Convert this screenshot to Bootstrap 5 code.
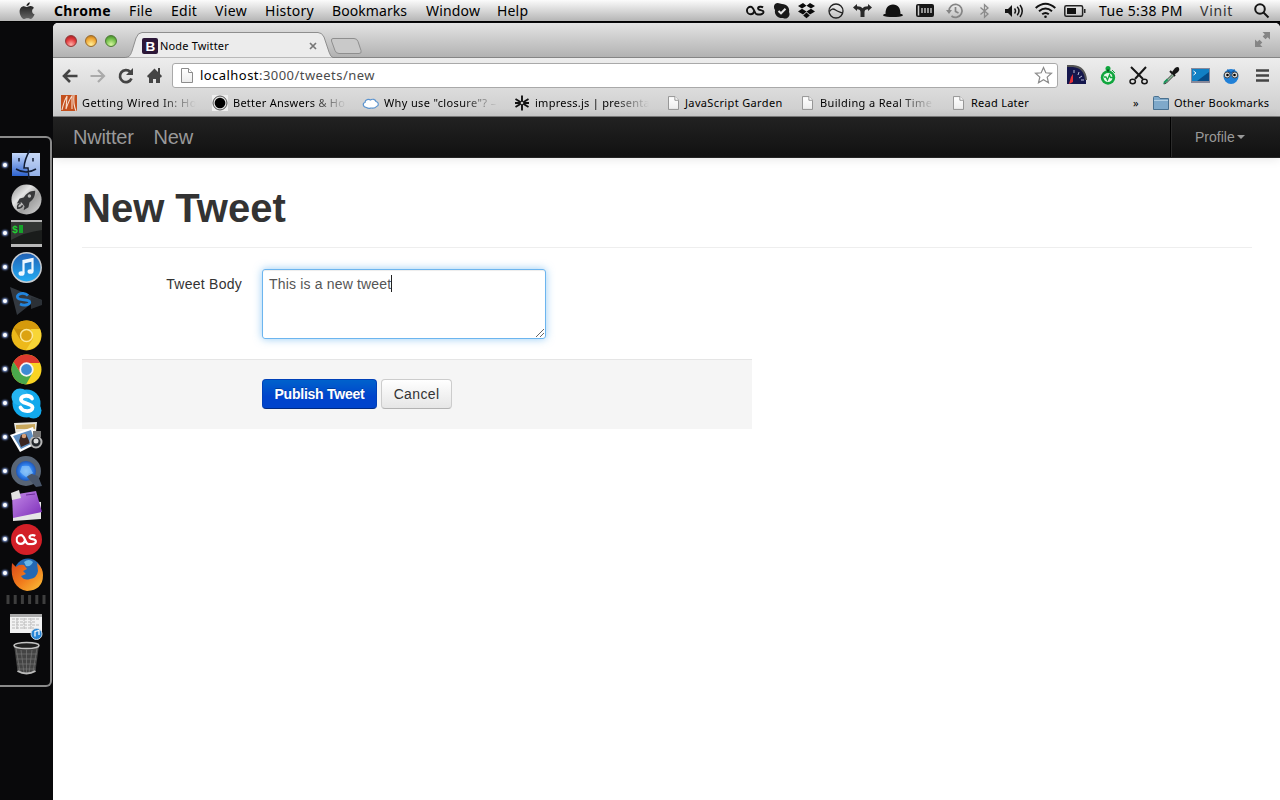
<!DOCTYPE html>
<html lang="en">
<head>
<meta charset="utf-8">
<title>Node Twitter</title>
<meta name="viewport" content="width=device-width, initial-scale=1">
<link rel="stylesheet" href="https://cdn.jsdelivr.net/npm/bootstrap@5.3.0/dist/css/bootstrap.min.css">
<style>
html,body{height:800px;overflow:hidden}
body{background:#09090b;font-family:"Noto Sans","Open Sans",sans-serif;color:#000;line-height:1}
svg{display:block;overflow:visible}
.macbar{height:22px;background:linear-gradient(#fbfbfb,#b8b8b8 96%);border-bottom:1px solid #000;display:grid;font-size:14px;letter-spacing:.2px;white-space:nowrap;
grid-template-columns:54px 75px 42px 44px 50px 67px 94px 71px 249px 28px 24px 30px 25px 30px 33px 30px 34px 25px 30px 29px 35px 101px 54px 26px;align-items:center;line-height:21px}
.ls0{letter-spacing:.07px}.ls1{letter-spacing:.17px}.ls2{letter-spacing:.26px}.ls3{letter-spacing:.36px}.ls4{letter-spacing:.45px}.lsn{letter-spacing:-.24px}
.dockcol{width:53px;padding-top:114px}
.dockpanel{width:52px;height:551px;border:2px solid #8a8a8a;border-left:0;border-radius:0 6px 6px 0;padding-top:10px}
.dockapp{height:34px;padding-left:3px;gap:4px}
.dockapp i{width:4px;height:4px;border-radius:50%;background:#fff;box-shadow:0 0 2px 1px #7f9ad8;flex:none}
.dockapp i.off{visibility:hidden}
.browser{width:1227px;height:777px;background:#fff;border-radius:5px 5px 0 0;overflow:hidden;margin-top:1px}
.tabs-strip{height:35px;background:linear-gradient(#e3e3e3,#b2b2b2);border-bottom:1px solid #858585;padding-left:12px}
.ball{width:12px;height:12px;border-radius:50%;margin-right:8px;margin-bottom:3px}
.red{background:radial-gradient(circle at 50% 85%,#ffb0a8,#e2393c 55%,#9b1a1e);border:1px solid #8f3a39}
.yel{background:radial-gradient(circle at 50% 85%,#fff09a,#f0a632 60%,#a86a18);border:1px solid #97692c}
.grn{background:radial-gradient(circle at 50% 85%,#d8f7a0,#6dbb45 60%,#3b7a24);border:1px solid #4c7a35}
.tabbox{width:205px;height:25px;margin-left:0;position:relative;font-size:11px}
.tabbox>.shape{position:absolute;left:0;top:0}
.tabtext{position:relative;padding:2px 13px 0 17px;height:25px}
.chromebar{height:59px;background:linear-gradient(#ededed,#cccccc);border-bottom:1px solid #7c7c7c}
.tools{height:35px;display:grid;align-items:center;grid-template-columns:9px 28px 28px 28px 26px 886px 9px 33px 29px 34px 28px 32px 33px 1fr}
.omni{height:25px;background:#fff;border:1px solid #a9a9a9;border-radius:3px;padding:0 5px 0 8px;font-size:13px;color:#4b4b4b}
.marks{height:22px;display:grid;align-items:center;font-size:11px;white-space:nowrap;line-height:16px;
grid-template-columns:8px 21px 130px 21px 130px 21px 130px 21px 132px 18px 116px 19px 132px 19px 162px 20px 21px 1fr;margin-top:-1px}
.fadeout{width:114px;overflow:hidden;-webkit-mask-image:linear-gradient(90deg,#000 68%,transparent);mask-image:linear-gradient(90deg,#000 68%,transparent)}
.site{font-family:"Liberation Sans",Arial,sans-serif;color:#333;font-size:14px;line-height:20px}
.sitenav{height:41px;background:linear-gradient(#222,#111);border-bottom:1px solid #252525;box-shadow:0 1px 10px rgba(0,0,0,.1);color:#999;font-size:20px;padding:0 0 0 20px}
.prof{width:110px;height:40px;border-left:1px solid #000;box-shadow:inset 1px 0 #2b2b2b;padding-left:24px;font-size:14px}
.prof b{border:4px solid transparent;border-top-color:#999;border-bottom:0;margin-left:2px}
.pagebox{width:1170px;margin-left:29px;padding-top:30px}
.pagebox h1{font-size:40px;line-height:40px;font-weight:700;margin:0;padding-bottom:19px;border-bottom:1px solid #eee}
.formbox{width:670px;margin-top:21px}
.lab{width:160px;padding-top:5px;margin-right:20px}
.tweet{width:284px;height:70px;padding:4px 5px 4px 6px;border:1px solid rgba(82,168,236,.85);border-radius:3px;box-shadow:inset 0 1px 1px rgba(0,0,0,.075),0 0 8px rgba(82,168,236,.6);color:#555;position:relative}
.caret{display:inline-block;width:1px;height:17px;background:#222;vertical-align:-3px}
.grip{position:absolute;right:1px;bottom:1px}
.acts{height:70px;margin-top:20px;background:#f5f5f5;border-top:1px solid #e5e5e5;padding:19px 0 0 180px;gap:4px}
.acts .btn{height:30px;font-size:14px;line-height:20px;padding:4px 0;border-radius:4px}
.pub{width:115px;color:#fff;font-weight:700;background:linear-gradient(#0062cc,#04c 60%);border:1px solid #0040b8;border-bottom-color:#002a80;text-shadow:0 -1px 0 rgba(0,0,0,.25)}
.can{width:71px;color:#333;background:linear-gradient(#fff,#e6e6e6);border:1px solid #ccc;border-bottom-color:#b3b3b3}
</style>
</head>
<body>
<svg width="0" height="0" class="position-absolute"><defs>
<linearGradient id="gBlue" x2="0" y2="1"><stop stop-color="#c4d8fa"/><stop offset="1" stop-color="#2e63cf"/></linearGradient>
<linearGradient id="gSil" x2="1" y2="1"><stop stop-color="#8b8b8b"/><stop offset=".35" stop-color="#e4e4e4"/><stop offset=".6" stop-color="#a0a0a0"/><stop offset="1" stop-color="#d5d5d5"/></linearGradient>
<linearGradient id="gTun" x2="0" y2="1"><stop stop-color="#2160b4"/><stop offset="1" stop-color="#24aef5"/></linearGradient>
<radialGradient id="gQt"><stop stop-color="#bfe2ff"/><stop offset=".5" stop-color="#2f80ec"/><stop offset="1" stop-color="#143a94"/></radialGradient>
<linearGradient id="gPur" x2="1" y2="1"><stop stop-color="#c58be8"/><stop offset="1" stop-color="#7b2cb8"/></linearGradient>
<linearGradient id="gFox" x2="1" y2="1"><stop stop-color="#d9481a"/><stop offset=".5" stop-color="#f17c1c"/><stop offset="1" stop-color="#fbc53a"/></linearGradient>
<linearGradient id="gPage" x2="0" y2="1"><stop stop-color="#fff"/><stop offset="1" stop-color="#ececec"/></linearGradient>
<linearGradient id="gApple" x2="0" y2="1"><stop stop-color="#111"/><stop offset="1" stop-color="#666"/></linearGradient>
<symbol id="doc" viewBox="0 0 12 15"><path d="M.5.5h7l4 4v10H.5z" fill="url(#gPage)" stroke="#8b8b8b"/><path d="M7.500.500v4h4" fill="#fff" stroke="#8b8b8b"/></symbol>
<symbol id="scrobble" viewBox="0 0 20 11"><path d="M11.500 9.500C8.800 9.500 8.500 1.500 5 1.500a4 4 0 0 0 0 8c2 0 3-1.200 3.500-3M18 2.200c-1.500-1-5.300-1-5.300 1.100 0 2.400 5.800 1.200 5.800 3.900 0 2.300-4 2.900-7 2.300" fill="none" stroke="currentColor" stroke-width="2"/></symbol>
</defs></svg>

<header class="macbar">
<svg width="16" height="18" viewBox="0 0 16 18" style="margin-left:19px"><path d="M10.800.200c.1 2-1.400 3.900-3.300 3.900C7.300 2.300 9 .500 10.800.200zM8 5c.8 0 1.900-1 3.600-.900 1.400.1 2.600.7 3.300 1.800-2.700 1.700-2.200 5.400.7 6.400-.7 2-2.300 4.700-3.900 4.700-1.200 0-1.700-.7-3.200-.7s-2 .7-3.200.7C3.200 17 .600 13.200.600 9.700c0-3.300 2-5.500 4.300-5.500C6.300 4.200 7.200 5 8 5z" fill="url(#gApple)"/></svg>
<div class="fw-bold ls3">Chrome</div><div class="ls3">File</div><div class="ls2">Edit</div><div class="ls3">View</div><div class="ls2">History</div><div class="ls0">Bookmarks</div><div class="ls1">Window</div><div class="ls1">Help</div>
<svg width="19" height="11"><use href="#scrobble" style="color:#111"/></svg>
<svg width="16" height="16" viewBox="0 0 16 16"><path d="M1 1c3-2 5 0 7 0 5 0 8 4 7 8 2 4-2 8-6 6C4 15.500 0 12 1 7-.500 5-.300 2.500 1 1z" fill="#191919"/><path d="M4.500 8l2.500 2.300 4.500-4.500" fill="none" stroke="#e5e5e5" stroke-width="2"/></svg>
<svg width="17" height="16" viewBox="0 0 17 16"><path d="M5 0l3.500 2.800L4 5.600 0 3zM12 0L8.500 2.800 13 5.600 17 3zM4 5.800l4.500 2.800L5 11.500 0 8.600zM13 5.800L8.500 8.600l3.500 2.900 5-2.900zM8.500 9.600l3.300 2.800-3.300 2.800-3.300-2.800z" fill="#0b0b0b"/></svg>
<svg width="16" height="16" viewBox="0 0 16 16" fill="none" stroke="#222" stroke-width="1.300"><circle cx="8" cy="8" r="7"/><path d="M1.500 8.500c1.500-3 4-3 6-1.500s4 1.800 7 3"/></svg>
<svg width="19" height="14" viewBox="0 0 19 14"><path d="M0 3.500L4 0v2.200c3 0 4.500.8 5.500 2 1-1.200 2.500-2 5.500-2V0l4 3.500L15 7V5.200c-2.500 0-3.500 1-3.500 3V13h-4V8.200c0-2-1-3-3.500-3V7z" fill="#282828"/></svg>
<svg width="20" height="14" viewBox="0 0 20 14"><path d="M0 11.500c.2-1.500 1.300-1.500 2.500-1.500C2.500 4 5 .500 10 .500S17.500 4 17.500 10c1.200 0 2.300 0 2.500 1.500-3 2-17 2-20 0z" fill="#111"/></svg>
<svg width="19" height="13" viewBox="0 0 19 13"><rect width="18" height="13" rx="2" fill="#171717"/><path d="M6 4v5M9 4v5M12 4v5M15 4v5" stroke="#aaa" stroke-width="1.700"/><path d="M2.500 1.500v10" stroke="#ccc" stroke-width="1.500"/></svg>
<svg width="18" height="16" viewBox="0 0 18 16" fill="none" stroke="#848484" stroke-width="1.700"><path d="M3 8a6.500 6.500 0 1 1 2.500 5M9.500 4v4.500l3 1.500"/><path d="M0 7h6l-3 4z" fill="#848484" stroke="none"/></svg>
<svg width="9" height="14" viewBox="0 0 9 14" fill="none" stroke="#8a8a8a" stroke-width="1.300"><path d="M.500 3.500L8 10l-3.500 3.300V.700L8 4 .500 10.500"/></svg>
<svg width="20" height="14" viewBox="0 0 20 14" fill="none" stroke="#151515" stroke-width="1.500"><path d="M0 5h3l4-4v12L3 9H0z" fill="#151515" stroke="none"/><path d="M9.500 4.500q2 2.500 0 5M12.200 2.800q3.600 4.200 0 8.400M15 1q4.500 6 0 12"/></svg>
<svg width="21" height="15" viewBox="0 0 21 15" fill="none" stroke="#111" stroke-width="2"><path d="M.700 5q9.800-8.500 19.600 0M4 8.300q6.500-5.500 13 0M7.200 11.300q3.300-2.700 6.600 0"/><circle cx="10.500" cy="13.700" r="1.300" fill="#111" stroke="none"/></svg>
<svg width="22" height="12" viewBox="0 0 22 12"><rect x=".8" y=".8" width="17.800" height="10.400" rx="1.500" fill="none" stroke="#222" stroke-width="1.500"/><path d="M3 3h9v6H3z" fill="#111"/><path d="M20 4h1.500v4H20z" fill="#222"/></svg>
<div class="ls3">Tue 5:38 PM</div><div style="color:#333;letter-spacing:.75px">Vinit</div>
<svg width="15" height="15" viewBox="0 0 15 15" fill="none" stroke="#161616" stroke-width="2"><circle cx="6" cy="6" r="4.800"/><path d="M9.500 9.500l5 5"/></svg>
</header>

<div class="d-flex">
<aside class="dockcol flex-shrink-0"><div class="dockpanel">
<div class="dockapp d-flex align-items-center"><i></i><svg width="30" height="30" viewBox="-1 0 30 30"><path d="M0 3h28v23H0z" fill="url(#gBlue)"/><path d="M18 3h10v23H16l-1-7h-3Q12 10 18 3z" fill="#c9d9f4" opacity=".65"/><path d="M18 0q-5.500 9-6 18h4l1 11M4 19q10 6 20 0M7 8v3.500M21 8v3.500" fill="none" stroke="#111c33" stroke-width="1.500"/></svg></div>
<div class="dockapp d-flex align-items-center"><i class="off"></i><svg width="31" height="31" viewBox="0 0 32 32"><circle cx="16" cy="16" r="15.500" fill="url(#gSil)"/><path d="M25 7c-6 0-9 3-12 7l-4 1-3 5 5-1 3 4-1 4 5-3 1-5c4-3 6-6 6-12z" fill="#37383a"/><circle cx="19" cy="12.500" r="1.800" fill="#bbb"/><path d="M10 20q-4 1-3 5 4 0 5-3" fill="none" stroke="#37383a" stroke-width="1.500"/></svg></div>
<div class="dockapp d-flex align-items-center"><i></i><svg width="31" height="27" viewBox="0 0 31 27"><rect width="31" height="27" fill="#b8b8b8"/><path d="M0 2h31v22H0z" fill="#1a1c1b"/><path d="M31 2v8Q14 12 0 20V2z" fill="#343735"/><path d="M8 5h4v8H8z" fill="#16a32b"/><text x="1" y="12.500" font-size="10" font-family="Liberation Mono" font-weight="bold" fill="#1fd331">$</text></svg></div>
<div class="dockapp d-flex align-items-center"><i></i><svg width="31" height="31" viewBox="0 0 31 31"><circle cx="15.500" cy="15.500" r="14.700" fill="url(#gTun)" stroke="#c7cbd0" stroke-width="1.500"/><path d="M12.500 21V9l9-2v12" fill="none" stroke="#eef7ff" stroke-width="2.200"/><path d="M12.500 10l9-2" stroke="#eef7ff" stroke-width="3"/><ellipse cx="10.500" cy="21.500" rx="3" ry="2.300" fill="#eef7ff"/><ellipse cx="19.500" cy="19.500" rx="3" ry="2.300" fill="#eef7ff"/></svg></div>
<div class="dockapp d-flex align-items-center"><i></i><svg width="32" height="28" viewBox="0 0 32 28"><path d="M-1 0l32 13-11 4-14 11z" fill="#33383f"/><path d="M20 10l11 3v5l-11 4z" fill="#2b3036"/><path d="M17 8.500C13 4.500 5 7 6.500 10.500S17 12 18.500 14.500 14 19.500 9 17" fill="none" stroke="#2286df" stroke-width="2.800"/></svg></div>
<div class="dockapp d-flex align-items-center"><i></i><svg width="31" height="31" viewBox="0 0 31 31"><circle cx="15.500" cy="15.500" r="15" fill="#edb91a"/><path d="M2.500 8A15 15 0 0 1 29 9H15.500z" fill="#d59a0c"/><path d="M2.500 8l7 12L15 9z" fill="#c78e08"/><path d="M29 9a15 15 0 0 1-14 21l7-11-2-10z" fill="#f8d536"/><circle cx="15.500" cy="15.500" r="6" fill="#dca312" stroke="#fbe89a" stroke-width="1.500"/></svg></div>
<div class="dockapp d-flex align-items-center"><i></i><svg width="31" height="31" viewBox="0 0 31 31"><circle cx="15.500" cy="15.500" r="15" fill="#f9d423"/><path d="M2.500 8A15 15 0 0 1 29 9H15.500l-6 10z" fill="#dc3a2e"/><path d="M2.500 8A15 15 0 0 0 15 30.500L21.500 19H9.500z" fill="#4aa84c"/><circle cx="15.500" cy="15.500" r="6.300" fill="#3d8bd4" stroke="#f3f3f3" stroke-width="1.800"/></svg></div>
<div class="dockapp d-flex align-items-center"><i></i><svg width="31" height="31" viewBox="0 0 31 31"><circle cx="15.500" cy="15.500" r="14" fill="#12a9ec"/><circle cx="9" cy="9" r="8.500" fill="#25b4f1"/><circle cx="22.500" cy="22.500" r="8" fill="#12a9ec"/><path d="M21 10.500C19 6.500 10 7 10 11.500S21.500 15 21.500 19.500 12 24.500 9.500 19.500" fill="none" stroke="#fff" stroke-width="3.800" stroke-linecap="round"/></svg></div>
<div class="dockapp d-flex align-items-center"><i></i><svg width="32" height="30" viewBox="0 0 32 30"><path d="M3 1l23-1-2 20H6z" fill="#e9e6dd"/><path d="M5 3l19-1v5H5z" fill="#c9a85c"/><path d="M-1 13l23-8 5 16-18 9z" fill="#fff"/><path d="M2 14l18-6 4 12-14 7z" fill="#5f8fc2"/><path d="M10 13l5-1 4 9-9 4-2-6z" fill="#3b2621"/><circle cx="13" cy="14" r="2.300" fill="#d7a078"/><circle cx="25" cy="20" r="5.500" fill="#23262a" stroke="#b5b5b5" stroke-width="2"/><circle cx="25" cy="19" r="2.500" fill="#ddd"/><path d="M22 9h8v6h-8z" fill="#777"/></svg></div>
<div class="dockapp d-flex align-items-center"><i></i><svg width="31" height="31" viewBox="0 0 31 31"><circle cx="15" cy="15" r="12.500" fill="url(#gQt)" stroke="#596575" stroke-width="5"/><path d="M18 17l9 3 4 10-6 1-9-10z" fill="#49566a"/><path d="M11 10h7l4 7-7 4-6-5z" fill="#7dbcf8" opacity=".8"/></svg></div>
<div class="dockapp d-flex align-items-center"><i></i><svg width="33" height="31" viewBox="1 0 33 31" style="margin-left:-1px"><path d="M4 10l28 2v17l-28 2z" fill="#e6e6e6"/><path d="M3 5l24-4 6 21-29 6z" fill="url(#gPur)"/><path d="M2 3l8-3 2 8-9 2z" fill="#e2e2e2"/><path d="M17 5l9-1" stroke="#6b2a98"/></svg></div>
<div class="dockapp d-flex align-items-center"><i></i><svg width="31" height="31" viewBox="0 0 31 31"><circle cx="15.500" cy="15.500" r="15.500" fill="#d31f27"/><use href="#scrobble" x="4.500" y="9.500" width="22" height="12.100" style="color:#fff"/></svg></div>
<div class="dockapp d-flex align-items-center"><i></i><svg width="32" height="31" viewBox="0 0 32 31"><circle cx="17" cy="14" r="13.500" fill="#2368b4"/><path d="M13 4q5-4 9 0-2 5-7 4z" fill="#69b6e8"/><path d="M1 5l4 4q3-3 8-2l3 4-4 2 3 3-5 2q3 5 9 3 7-1 8-8l-1-8q6 5 6 12 0 15-16 16C5 31-1 22 1 5z" fill="url(#gFox)"/></svg></div>
<div style="padding:5px 0 0 6px"><svg width="42" height="9"><path d="M2 0v9M9.200 0v9M16.400 0v9M23.600 0v9M30.800 0v9M38 0v9" stroke="#3e3e3e" stroke-width="3"/></svg></div>
<div style="padding:10px 0 0 10px"><svg width="33" height="26" viewBox="0 0 33 26"><path d="M0 0h32v19H0z" fill="#f2f2f2"/><path d="M0 1.500h32" stroke="#aaa" stroke-width="3"/><path d="M2 5h27M2 8h24M2 11h28M2 14h22M7 4v12M14 4v12M21 4v12" stroke="#b8b8b8" stroke-dasharray="3 1"/><circle cx="26.500" cy="20" r="5.500" fill="#2886d6" stroke="#c8d8e5"/><path d="M25 22.500v-5l4-1v4.500" stroke="#fff" fill="none" stroke-width="1.200"/></svg></div>
<div style="padding:2px 0 0 13px"><svg width="27" height="33" viewBox="0 0 27 33"><path d="M1 3l3.500 26q9 5 18 0L26 3z" fill="#444"/><path d="M3 6l4 24M8 8l3 23M13.500 8v23M19 8l-3 23M24 6l-4 24M3 12h21M3.500 17h20M4 22h19M4.500 27h18" stroke="#777" stroke-width=".7"/><ellipse cx="13.500" cy="3.500" rx="12.500" ry="3" fill="#202020" stroke="#c4c4c4" stroke-width="1.500"/><path d="M4.500 29q9 5 18 0" fill="none" stroke="#bbb" stroke-width="2"/></svg></div>
</div></aside>

<main class="browser">
<div class="tabs-strip d-flex align-items-end position-relative">
<div class="d-flex" style="margin-bottom:7px"><span class="ball red"></span><span class="ball yel"></span><span class="ball grn"></span></div>
<div class="tabbox"><svg class="shape" width="209" height="26" viewBox="0 0 209 26"><path d="M0 25.500C5 25 5.500 23 7 19L11 6Q13 .5 17 .5H193Q197 .500 199 5l5 15q1.500 5 4 5.500" fill="#ececec" stroke="#8e8e8e"/></svg>
<div class="tabtext d-flex align-items-center"><svg width="16" height="16" viewBox="0 0 16 16"><rect width="16" height="16" rx="2" fill="#2c1738"/><text x="3.400" y="13" font-family="Liberation Sans" font-weight="bold" font-size="13.500" fill="#fff">B</text></svg><span class="ls1" style="margin-left:2px">Node Twitter</span><svg class="ms-auto" width="8" height="8" viewBox="0 0 8 8"><path d="M1 1l6 6M7 1L1 7" stroke="#777" stroke-width="1.700"/></svg></div></div>
<svg width="33" height="16" viewBox="0 0 33 16" style="margin:0 0 3px 0"><path d="M3 .5h21q3 0 4 3l3 9q1 3-2 3H9q-3 0-4-3L1.500 3Q1 .5 3 .5z" fill="#c9c9c9" stroke="#8e8e8e"/></svg>
<svg class="ms-auto" width="15" height="15" viewBox="0 0 14 14" style="margin:0 10px 10px 0" fill="#858585"><path d="M7 0h7v7l-2.200-2.200-2 2-2.600-2.600 2-2zM0 7l2.200 2.200 2-2 2.600 2.600-2 2L7 14H0z"/></svg>
</div>
<div class="chromebar">
<div class="tools"><span></span>
<svg width="16" height="14" viewBox="0 0 16 14" fill="none" stroke="#444" stroke-width="2.600"><path d="M15.500 7H2M8 1L2 7l6 6"/></svg>
<svg width="16" height="14" viewBox="0 0 16 14" fill="none" stroke="#aaa" stroke-width="2.200"><path d="M.500 7H14M8 1l6 6-6 6"/></svg>
<svg width="16" height="16" viewBox="0 0 16 16"><path d="M12.300 4A6 6 0 1 0 13.500 10.500" fill="none" stroke="#444" stroke-width="2.700"/><path d="M15 0v7H8z" fill="#444"/></svg>
<svg width="15" height="15" viewBox="0 0 15 15" fill="#444" style="margin-left:1px"><path d="M7.500.5L11 4V0h2v6l2 2-1 1.500h-1V15H9v-4H6v4H2V9.500H1L0 8z"/></svg>
<div class="omni d-flex align-items-center"><svg width="12" height="15"><use href="#doc"/></svg><span class="ls4" style="margin-left:7px"><span class="text-black">localhost</span>:3000/tweets/new</span><svg class="ms-auto" width="17" height="17" viewBox="0 0 17 17"><path d="M8.500.5l2.300 5.300 5.700.5-4.300 3.800 1.300 5.700-5-3-5 3 1.300-5.700L.500 6.300l5.700-.5z" fill="#fff" stroke="#8a8a8a" stroke-width="1.200"/></svg></div><span></span>
<svg width="20" height="19" viewBox="0 0 20 19"><path d="M0 0h6q12 1 13 14v4H0z" fill="#15174d"/><path d="M0 0h6q12 1 13 14" fill="none" stroke="#555" stroke-width="2"/><path d="M2 18l2-7 2-3v8z" fill="#e53239"/><path d="M7 4v3M12 6l-1 3M15 10l-3 2M17 14h-3" stroke="#b9bcd8"/></svg>
<svg width="16" height="19" viewBox="0 0 16 19"><circle cx="8" cy="11.500" r="7.200" fill="#10a63e"/><circle cx="8" cy="2.500" r="2.500" fill="#10a63e"/><path d="M7 3h2v3H7zM12 4l3 3" stroke="#10a63e"/><circle cx="8" cy="11.500" r="4.500" fill="#e8f8eb"/><path d="M4 11h2l1.500 3L9.500 9l1 2.500H13" fill="none" stroke="#10a63e" stroke-width="1.300"/></svg>
<svg width="20" height="19" viewBox="0 0 20 19" fill="none" stroke="#171717"><path d="M2 1l12 12M17 1L6 13" stroke-width="2"/><ellipse cx="3.700" cy="15.500" rx="2.700" ry="2.200" stroke-width="1.500"/><ellipse cx="15.500" cy="15.500" rx="2.700" ry="2.200" stroke-width="1.500"/></svg>
<svg width="16" height="18" viewBox="0 0 16 18"><path d="M9 5l3-4q3-2 4 0t-1 4l-4 3z" fill="#151515"/><path d="M7 4l5 5" stroke="#151515" stroke-width="2"/><path d="M9.500 7l-7 7-1 3 2-1 7-7" fill="#8fbf9c" stroke="#444"/><path d="M0 17.500l1-3 3-3 1 2z" fill="#15965a"/></svg>
<svg width="19" height="15" viewBox="0 0 19 15"><path d="M0 0h19v15H0z" fill="#889"/><path d="M1 1h17v12H1z" fill="#064c87"/><path d="M18 1v3L6 13H1V1z" fill="#1180c4"/><path d="M2.500 3l2.500 2-2.500 2" stroke="#fff" fill="none"/></svg>
<svg width="16" height="16" viewBox="0 0 16 16"><circle cx="8" cy="8.500" r="7.500" fill="#2080d7"/><path d="M4 1l4 3 4-3-1 4H5z" fill="#125ba8"/><circle cx="4.200" cy="7" r="3" fill="#ddd" stroke="#444"/><circle cx="11.800" cy="7" r="3" fill="#ddd" stroke="#444"/><circle cx="4.500" cy="7" r="1.300"/><circle cx="11.500" cy="7" r="1.300"/></svg>
<svg width="13" height="13" viewBox="0 0 13 13"><path d="M0 1.500h13M0 6.500h13M0 11.500h13" stroke="#444" stroke-width="2.600"/></svg>
</div>
<div class="marks"><span></span>
<svg width="16" height="16" viewBox="0 0 16 16"><path d="M0 0h16v16H0z" fill="#c4501d"/><path d="M1 15Q3 6 6 1L5 14Q8 5 11 1v13M13 0q-1 9 2 16" fill="none" stroke="#f7dccb" stroke-width="1.100"/></svg><div class="fadeout ls4">Getting Wired In: Ho</div>
<svg width="16" height="16" viewBox="0 0 16 16"><path d="M0 0h16v16H0z" fill="#eee"/><circle cx="8" cy="8" r="7" fill="#ddd" stroke="#555"/><circle cx="8" cy="8" r="5.300"/></svg><div class="fadeout ls2">Better Answers &amp; Ho</div>
<svg width="16" height="16" viewBox="0 0 16 16"><path d="M3.500 12.500C-.500 12-.500 8 2 7.500 2 4 6 4 7.500 5c2-1.500 5-.5 5.500 1.500 3 .5 3 4.500.5 5-2 2.500-4 1.500-5 1.500s-3 1-5-.5z" fill="#fff" stroke="#5c94cf" stroke-width="1.200"/></svg><div class="fadeout ls3">Why use "closure"? –</div>
<svg width="16" height="16" viewBox="0 0 16 16"><path d="M8 .5V15.500M1.500 4l13 8M1.500 12l13-8M1 8h14" stroke="#111" stroke-width="1.900"/><circle cx="8" cy="8" r="1.300" fill="#ccc"/></svg><div class="fadeout ls2">impress.js | presenta</div>
<svg width="11" height="14" style="margin-left:1px"><use href="#doc"/></svg><div class="ls3">JavaScript Garden</div>
<svg width="11" height="14" style="margin-left:1px"><use href="#doc"/></svg><div class="fadeout ls3">Building a Real Time</div>
<svg width="11" height="14" style="margin-left:1px"><use href="#doc"/></svg><div class="ls2">Read Later</div>
<span>»</span>
<svg width="16" height="14" viewBox="0 0 16 14"><path d="M.5 1.500q0-1 1-1h4l1.500 2h8.500v11H.5z" fill="#7fa9ca" stroke="#49708f"/><path d="M1 4.500h14" stroke="#b4d0e4"/></svg><div class="ls2">Other Bookmarks</div>
</div>
</div>

<div class="site">
<nav class="sitenav d-flex align-items-center"><span class="lsn">Nwitter</span><span class="lsn" style="margin-left:20px">New</span><div class="prof ms-auto d-flex align-items-center"><span>Profile</span><b></b></div></nav>
<div class="pagebox">
<h1>New Tweet</h1>
<div class="formbox">
<div class="d-flex"><div class="lab text-end ls2">Tweet Body</div><div class="tweet"><span class="ls1">This is a new tweet</span><span class="caret"></span><svg class="grip" width="8" height="8"><path d="M0 8L8 0M4 8l4-4" stroke="#666"/></svg></div></div>
<div class="acts d-flex"><button class="btn pub lsn">Publish Tweet</button><button class="btn can ls3">Cancel</button></div>
</div></div>
</div>
</main>
</div>
<script src="https://cdn.jsdelivr.net/npm/bootstrap@5.3.0/dist/js/bootstrap.bundle.min.js"></script>
</body>
</html>
